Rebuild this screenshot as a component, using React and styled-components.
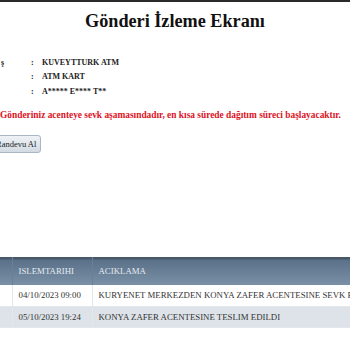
import React from "react";
import styled, { createGlobalStyle } from "styled-components";

const SERIF = `"Liberation Serif", "Times New Roman", Times, serif`;

const Global = createGlobalStyle`
  html, body { margin: 0; padding: 0; background: #fff; }
  body { width: 350px; height: 350px; overflow: hidden; font-family: ${SERIF}; }
`;

const Page = styled.div`
  width: 350px;
  border-top: 2px solid #2a2a2a;
  overflow: hidden;
`;

const Title = styled.h1`
  margin: 8px 0 0;
  font-size: 18.2px;
  font-weight: bold;
  text-align: center;
  color: #111;
  line-height: 22px;
`;

const Info = styled.div`
  display: grid;
  grid-template-columns: 31px 11px auto;
  grid-auto-rows: 14.5px;
  margin-top: 23px;
  align-items: center;
  font-size: 8px;
  font-weight: bold;
  color: #222;
`;

const Label = styled.span`
  padding-left: 1px;
`;

const Colon = styled.span``;

const Value = styled.span`
  white-space: nowrap;
`;

const Message = styled.p`
  margin: 10px 0 0;
  font-size: 9.4px;
  font-weight: bold;
  color: #dc1226;
  white-space: nowrap;
  line-height: 12px;
`;

const Button = styled.button`
  display: block;
  margin: 14px 0 0 -9px;
  height: 18px;
  padding: 0 4px;
  font-family: ${SERIF};
  font-size: 8.5px;
  color: #222;
  border: 1px solid #aab6c2;
  border-radius: 3px;
  background: linear-gradient(#eef2f6, #d2dbe3);
`;

const Table = styled.table`
  margin-top: 104px;
  width: 560px;
  table-layout: fixed;
  border-collapse: collapse;
  white-space: nowrap;
  font-size: 8.8px;
`;

const HeadRow = styled.tr`
  height: 28px;
  background: linear-gradient(#485868 0, #485868 2px, #5b7189 3px, #7a90a6);
`;

const Th = styled.th`
  text-align: left;
  font-weight: normal;
  color: #e4ebf2;
  padding: 0 0 0 6px;
  border-left: 1px solid #6a8098;
  overflow: hidden;
  &:first-child { border-left: none; }
`;

const Row = styled.tr`
  height: ${(p) => p.$h}px;
  background: ${(p) => (p.$alt ? "#dde3e8" : "#fff")};
  border-bottom: 1px solid #e3e7eb;
`;

const Td = styled.td`
  color: #333;
  padding: 0 0 0 6px;
  border-left: 1px solid #e3e6ea;
  overflow: hidden;
  &:first-child { border-left: none; padding: 0; }
`;

export default function App() {
  const info = [
    ["ş", "KUVEYTTURK ATM"],
    ["", "ATM KART"],
    ["", "A***** E**** T**"],
  ];
  const rows = [
    ["04/10/2023 09:00", "KURYENET MERKEZDEN KONYA ZAFER ACENTESINE SEVK EDILDI"],
    ["05/10/2023 19:24", "KONYA ZAFER ACENTESINE TESLIM EDILDI"],
  ];
  return (
    <Page>
      <Global />
      <Title>Gönderi İzleme Ekranı</Title>
      <Info>
        {info.map(([l, v], i) => (
          <React.Fragment key={i}>
            <Label>{l}</Label>
            <Colon>:</Colon>
            <Value>{v}</Value>
          </React.Fragment>
        ))}
      </Info>
      <Message>
        Gönderiniz acenteye sevk aşamasındadır, en kısa sürede dağıtım süreci başlayacaktır.
      </Message>
      <Button>Randevu Al</Button>
      <Table>
        <colgroup>
          <col style={{ width: 12 }} />
          <col style={{ width: 80 }} />
          <col />
        </colgroup>
        <thead>
          <HeadRow>
            <Th></Th>
            <Th>ISLEMTARIHI</Th>
            <Th>ACIKLAMA</Th>
          </HeadRow>
        </thead>
        <tbody>
          {rows.map(([d, a], i) => (
            <Row key={i} $alt={i % 2 === 1} $h={i === 0 ? 22 : 21}>
              <Td></Td>
              <Td>{d}</Td>
              <Td>{a}</Td>
            </Row>
          ))}
        </tbody>
      </Table>
    </Page>
  );
}
